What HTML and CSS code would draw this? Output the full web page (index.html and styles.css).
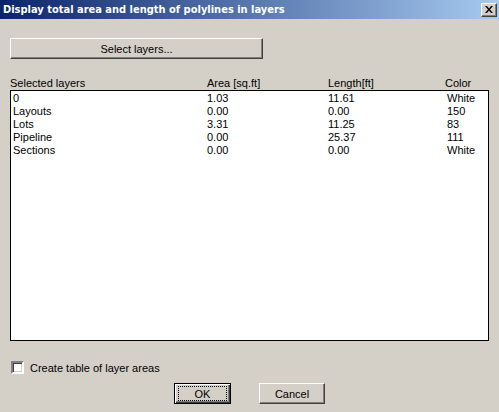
FILE: index.html
```html
<!DOCTYPE html>
<html lang="en">
<head>
    <meta charset="utf-8">
    <title>Display total area and length of polylines in layers</title>
    <link rel="stylesheet" href="styles.css">
</head>
<body>
    <div class="dialog">
        <div class="titlebar">
            <span class="title">Display total area and length of polylines in layers</span>
            <button class="close-btn" aria-label="Close">
                <svg width="8" height="7" viewBox="0 0 8 7">
                    <path d="M0 0h2l2 2.5L6 0h2L5 3.5 8 7H6L4 4.5 2 7H0l3-3.5z" fill="#000"/>
                </svg>
            </button>
        </div>

        <div class="content">
            <button class="win-btn select-btn">Select layers...</button>

            <div class="list-head">
                <span>Selected layers</span>
                <span>Area [sq.ft]</span>
                <span>Length[ft]</span>
                <span>Color</span>
            </div>

            <div class="listbox">
                <div class="row"><span>0</span><span>1.03</span><span>11.61</span><span>White</span></div>
                <div class="row"><span>Layouts</span><span>0.00</span><span>0.00</span><span>150</span></div>
                <div class="row"><span>Lots</span><span>3.31</span><span>11.25</span><span>83</span></div>
                <div class="row"><span>Pipeline</span><span>0.00</span><span>25.37</span><span>111</span></div>
                <div class="row"><span>Sections</span><span>0.00</span><span>0.00</span><span>White</span></div>
            </div>

            <label class="check-row">
                <span class="checkbox"></span>
                Create table of layer areas
            </label>

            <div class="actions">
                <button class="win-btn default-btn ok-btn"><span class="focus">OK</span></button>
                <button class="win-btn cancel-btn">Cancel</button>
            </div>
        </div>
    </div>
</body>
</html>
```

FILE: styles.css
```css
html, body {
    margin: 0;
    padding: 0;
    background-color: #d4d0c8;
}
body {
    font-family: "Liberation Sans", Arial, sans-serif;
    font-size: 11px;
    color: #000;
}
.dialog {
    width: 499px;
    height: 412px;
    background-color: #d4d0c8;
}
.titlebar {
    height: 19px;
    display: flex;
    align-items: center;
    justify-content: space-between;
    padding: 0 2px 0 3px;
    background: linear-gradient(to right, #0a246a, #a6caf0);
}
.title {
    font-family: "DejaVu Sans Condensed", "DejaVu Sans", sans-serif;
    font-weight: bold;
    font-size: 11px;
    color: #fff;
    white-space: nowrap;
}
.close-btn {
    width: 16px;
    height: 14px;
    padding: 0;
    display: flex;
    align-items: center;
    justify-content: center;
    background-color: #d4d0c8;
    border: 1px solid;
    border-color: #fff #404040 #404040 #fff;
    box-shadow: inset -1px -1px #808080;
}
.content {
    padding: 19px 10px 0 10px;
}
.win-btn {
    font-family: "Liberation Sans", Arial, sans-serif;
    font-size: 11px;
    color: #000;
    padding: 0;
    background-color: #d4d0c8;
    border: 1px solid;
    border-color: #fff #404040 #404040 #fff;
    box-shadow: inset -1px -1px #808080;
    display: block;
}
.select-btn {
    width: 253px;
    height: 21px;
}
.list-head {
    display: grid;
    grid-template-columns: 197px 121px 117px auto;
    margin-top: 18px;
    height: 13px;
    line-height: 13px;
}
.listbox {
    height: 248px;
    background-color: #fff;
    border: 1px solid #000;
    padding: 1px 0 0 2px;
    box-sizing: content-box;
}
.row {
    display: grid;
    grid-template-columns: 194px 121px 119px auto;
    height: 13px;
    line-height: 13px;
}
.check-row {
    display: flex;
    align-items: center;
    gap: 6px;
    margin-top: 20px;
    margin-left: 1px;
    height: 13px;
}
.checkbox {
    width: 9px;
    height: 9px;
    background-color: #fff;
    border: 2px solid;
    border-color: #808080 #fff #fff #808080;
    box-shadow: inset 1px 1px #404040, inset -1px -1px #d4d0c8;
}
.actions {
    display: flex;
    gap: 28px;
    margin-top: 9px;
    margin-left: 164px;
}
.default-btn {
    border: 1px solid #000;
    box-shadow: inset 1px 1px #fff, inset -1px -1px #404040, inset -2px -2px #808080;
    display: flex;
    align-items: center;
    justify-content: center;
}
.ok-btn {
    width: 57px;
    height: 21px;
}
.focus {
    display: flex;
    align-items: center;
    justify-content: center;
    width: 47px;
    height: 13px;
    border: 1px dotted #000;
}
.cancel-btn {
    width: 66px;
    height: 21px;
}
```
